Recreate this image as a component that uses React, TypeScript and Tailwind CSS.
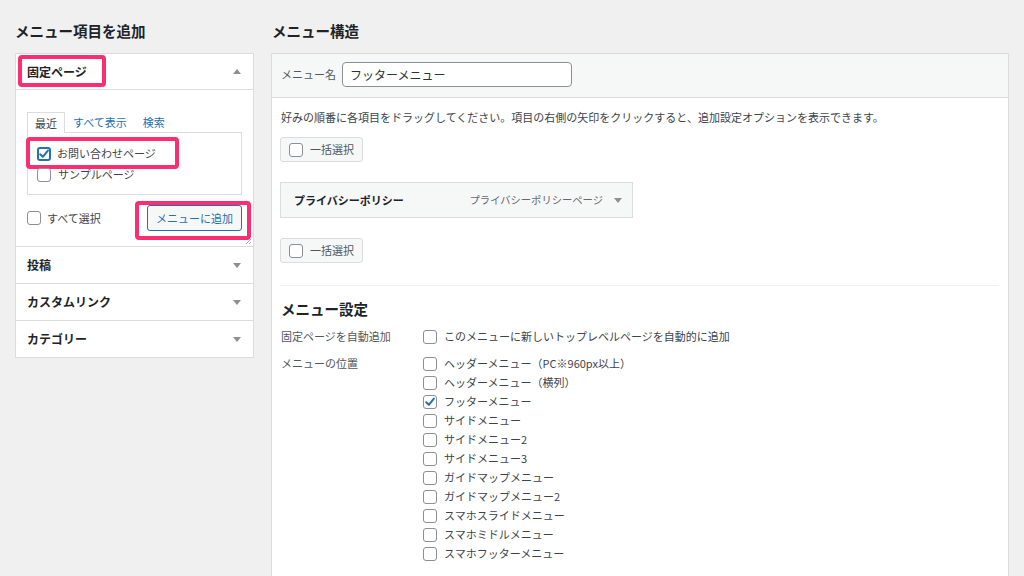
import React from "react";

const FONT = { fontFamily: "'Noto Sans CJK JP', 'Noto Sans', sans-serif" };

function Tri({ up = false }: { up?: boolean }) {
  return (
    <svg width="8" height="5" viewBox="0 0 8 5" className="shrink-0">
      {up ? <polygon points="0,5 8,5 4,0" fill="#8c8f94" /> : <polygon points="0,0 8,0 4,5" fill="#8c8f94" />}
    </svg>
  );
}

function Box({ checked = false, focus = false }: { checked?: boolean; focus?: boolean }) {
  return (
    <span
      className={
        "relative inline-flex h-[14px] w-[14px] shrink-0 items-center justify-center rounded-[3px] bg-white " +
        (focus ? "border-2 border-[#2271b1]" : "border border-[#8c8f94]")
      }
    >
      {checked && (
        <svg width="12" height="12" viewBox="0 0 12 12" className="absolute">
          <path d="M2.2 6.2 L4.8 8.8 L9.9 2.6" fill="none" stroke="#2271b1" strokeWidth="2" strokeLinecap="round" strokeLinejoin="round" />
        </svg>
      )}
    </span>
  );
}

function Pink({ className }: { className: string }) {
  return <div className={"pointer-events-none absolute rounded-[4px] border-[4px] border-[#fb2f6f] " + className} />;
}

function BulkBtn() {
  return (
    <div className="flex h-[25px] w-[83px] items-center gap-[7px] rounded-[3px] border border-[#dcdcde] bg-[#f6f7f7] pl-[8px] text-[11px] text-[#50575e]">
      <Box />
      <span>一括選択</span>
    </div>
  );
}

const locations: [string, boolean][] = [
  ["ヘッダーメニュー（PC※960px以上）", false],
  ["ヘッダーメニュー（横列）", false],
  ["フッターメニュー", true],
  ["サイドメニュー", false],
  ["サイドメニュー2", false],
  ["サイドメニュー3", false],
  ["ガイドマップメニュー", false],
  ["ガイドマップメニュー2", false],
  ["スマホスライドメニュー", false],
  ["スマホミドルメニュー", false],
  ["スマホフッターメニュー", false],
];

export default function App() {
  return (
    <div style={FONT} className="flex h-[576px] w-[1024px] gap-[17px] overflow-hidden bg-[#f0f0f1] pl-[15px] pt-[20px] text-[#3c434a]">
      {/* Left column */}
      <div className="w-[239px] shrink-0">
        <h2 className="mb-[11px] h-[22px] text-[14.5px] font-bold leading-[22px] text-[#1d2327]">メニュー項目を追加</h2>
        <div className="border border-[#dcdcde] bg-white">
          {/* header */}
          <div className="relative flex h-[36px] items-center justify-between border-b border-[#dcdcde] pl-[11px] pr-[12px]">
            <Pink className="left-[2px] top-[1px] h-[32px] w-[88px]" />
            <span className="text-[12px] font-bold text-[#1d2327]">固定ページ</span>
            <Tri up />
          </div>
          {/* body */}
          <div className="relative h-[157px] border-b border-[#dcdcde] px-[11px] pt-[22px]">
            <div className="relative z-10 flex h-[20px] items-end text-[11px]">
              <div className="flex h-[21px] items-center border border-b-0 border-[#dcdcde] bg-white px-[7px] -mb-px text-[#3c434a]">最近</div>
              <div className="ml-[8px] flex h-[20px] items-center text-[#2271b1]">すべて表示</div>
              <div className="ml-[16px] flex h-[20px] items-center text-[#2271b1]">検索</div>
            </div>
            <div className="relative h-[63px] border border-[#dcdcde] pl-[9px] pt-[10px] text-[11px]">
              <Pink className="-left-[2px] top-[4px] h-[32px] w-[153px]" />
              <div className="flex h-[21px] items-center gap-[6px]">
                <Box checked focus />
                <span>お問い合わせページ</span>
              </div>
              <div className="flex h-[21px] items-center gap-[7px]">
                <Box />
                <span>サンプルページ</span>
              </div>
            </div>
            <div className="relative mt-[10px] flex h-[26px] items-center justify-between text-[11px]">
              <div className="flex items-center gap-[6px]">
                <Box />
                <span>すべて選択</span>
              </div>
              <div className="flex h-[26px] w-[95px] items-center justify-center rounded-[3px] border border-[#2271b1] bg-[#f6f7f7] text-[#2271b1]">
                メニューに追加
              </div>
              <Pink className="left-[108px] -top-[4px] h-[39px] w-[116px]" />
            </div>
            <svg width="7" height="7" viewBox="0 0 7 7" className="absolute bottom-[1px] right-[1px]">
              <path d="M1 6 L6 1 M4 6 L6 4" stroke="#a7aaad" strokeWidth="1" />
            </svg>
          </div>
          {["投稿", "カスタムリンク", "カテゴリー"].map((t, i) => (
            <div
              key={t}
              className={"flex items-center justify-between pl-[11px] pr-[12px] " + (i < 2 ? "h-[37px] border-b border-[#dcdcde]" : "h-[36px]")}
            >
              <span className="text-[12px] font-bold text-[#1d2327]">{t}</span>
              <Tri />
            </div>
          ))}
        </div>
      </div>

      {/* Right column */}
      <div className="w-[738px] shrink-0">
        <h2 className="mb-[11px] ml-[1px] h-[22px] text-[14.5px] font-bold leading-[22px] text-[#1d2327]">メニュー構造</h2>
        <div className="h-[600px] border border-[#dcdcde] bg-white">
          <div className="flex h-[44px] items-start gap-[6px] border-b border-[#dcdcde] bg-[#f6f7f7] pl-[9px] pt-[8px]">
            <span className="flex h-[25px] items-center text-[11px] text-[#50575e]">メニュー名</span>
            <div className="flex h-[25px] w-[230px] items-center rounded-[4px] border border-[#8c8f94] bg-white pl-[7px] text-[12px] text-[#2c3338]">
              フッターメニュー
            </div>
          </div>
          <div className="px-[8px] pt-[11px]">
            <p className="h-[16px] pl-[1px] text-[11px] leading-[16px]">
              好みの順番に各項目をドラッグしてください。項目の右側の矢印をクリックすると、追加設定オプションを表示できます。
            </p>
            <div className="mt-[12px]">
              <BulkBtn />
            </div>
            <div className="mt-[20px] flex h-[36px] w-[353px] items-center justify-between border border-[#dcdcde] bg-[#f6f7f7] pl-[13px] pr-[10px]">
              <span className="text-[11px] font-bold text-[#1d2327]">プライバシーポリシー</span>
              <div className="flex items-center gap-[11px]">
                <span className="text-[10.3px] text-[#646970]">プライバシーポリシーページ</span>
                <Tri />
              </div>
            </div>
            <div className="mt-[20px]">
              <BulkBtn />
            </div>
            <div className="mr-[1px] mt-[22px] h-px bg-[#f0f0f1]" />
            <h3 className="mt-[12px] h-[22px] pl-[1px] text-[14.5px] font-bold leading-[22px] text-[#1d2327]">メニュー設定</h3>
            <div className="mt-[7px] flex h-[19px] items-center text-[11px]">
              <span className="w-[143px] pl-[1px] text-[#50575e]">固定ページを自動追加</span>
              <Box />
              <span className="ml-[7px]">このメニューに新しいトップレベルページを自動的に追加</span>
            </div>
            <div className="mt-[8px] flex text-[11px]">
              <span className="flex h-[19px] w-[143px] items-center pl-[1px] text-[#50575e]">メニューの位置</span>
              <div className="flex flex-col">
                {locations.map(([t, c]) => (
                  <div key={t} className="flex h-[19px] items-center gap-[7px]">
                    <Box checked={c} />
                    <span>{t}</span>
                  </div>
                ))}
              </div>
            </div>
          </div>
        </div>
      </div>
    </div>
  );
}
